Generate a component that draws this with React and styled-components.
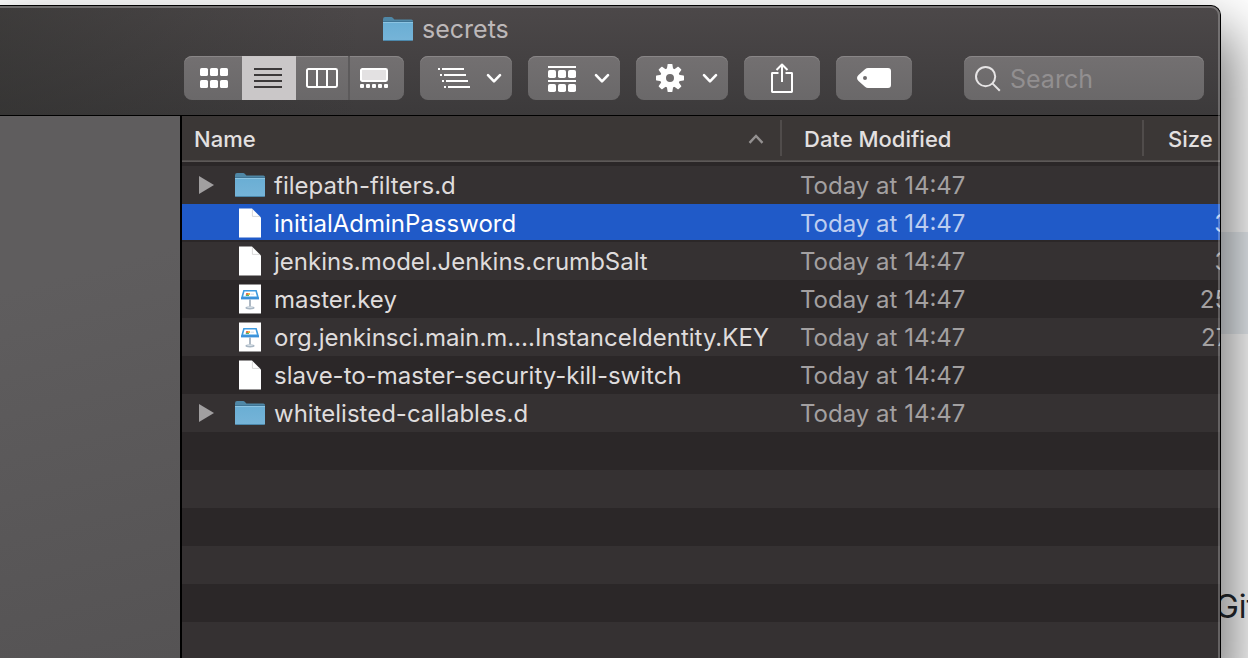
import React from "react";
import styled, { createGlobalStyle, css } from "styled-components";

const GlobalStyle = createGlobalStyle`
  *, *::before, *::after { box-sizing: border-box; }
  html, body { margin: 0; height: 100%; overflow: hidden; }
  body { font-family: Inter, "Liberation Sans", sans-serif; background: #fff; }
  #root { height: 100%; }
  button, input { font: inherit; color: inherit; }
`;

const Desktop = styled.div`
  position: relative;
  display: flex;
  height: 100%;
  padding: 5px 27px 0 0;
  overflow: hidden;
  background: linear-gradient(to bottom, transparent 232px, #eaeff3 232px, #eaeff3 334px, transparent 334px) #fff;
`;

const BehindText = styled.p`
  position: absolute;
  right: -9px;
  bottom: 31px;
  margin: 0;
  font-size: 32px;
  line-height: 40px;
  color: #24292e;
`;

const Window = styled.main`
  position: relative;
  flex: 1;
  min-width: 0;
  display: flex;
  flex-direction: column;
  border: solid #000;
  border-width: 1px 1px 0 0;
  border-radius: 0 10px 0 0;
  background: #2b2728;
  box-shadow: 0 36px 56px 12px rgba(0, 0, 0, 0.54);

  &::after {
    content: "";
    position: absolute;
    inset: 0;
    border: solid rgba(255, 255, 255, 0.24);
    border-width: 2px 2px 0 0;
    border-radius: 0 9px 0 0;
    pointer-events: none;
  }
`;

const Titlebar = styled.header`
  border-bottom: 1px solid #000;
  border-radius: 0 9px 0 0;
  background: linear-gradient(to right, rgba(48, 48, 46, 0.5), transparent 360px),
    linear-gradient(#4c4849, #3c3a3b);
`;

const Title = styled.h1`
  display: flex;
  align-items: center;
  gap: 9px;
  margin: 0;
  padding: 7px 0 11px 383px;
  font-size: 25px;
  font-weight: 400;
  line-height: 32px;
  color: #bdb8b9;
`;

const Toolbar = styled.div`
  display: flex;
  gap: 16px;
  padding: 0 16px 15px 184px;
`;

const controlSurface = css`
  height: 44px;
  border: 0;
  border-radius: 8px;
  background: linear-gradient(#737071, #6a6869);
  box-shadow: inset 0 1px #898687;
  color: #fff;
`;

const ViewSwitch = styled.div`
  ${controlSurface}
  display: flex;
  overflow: hidden;
`;

const ViewButton = styled.button`
  display: flex;
  align-items: center;
  justify-content: center;
  width: ${(p) => (p.$edge === "start" ? 58 : 54)}px;
  padding: ${(p) => (p.$edge === "start" ? "0 0 0 2px" : p.$edge === "end" ? "0 6px 0 0" : "0")};
  border: 0;
  border-right: ${(p) => (p.$divided ? "2px solid #5c5a5b" : "0")};
  background: ${(p) => (p.$active ? "#cac7c8" : "transparent")};
  color: ${(p) => (p.$active ? "#3c393a" : "#fff")};
  ${(p) => p.$active && "padding-right: 2px;"}
`;

const MenuButton = styled.button`
  ${controlSurface}
  display: flex;
  align-items: center;
  justify-content: space-between;
  width: 92px;
  padding: 0 10px 0 17px;
`;

const ActionButton = styled.button`
  ${controlSurface}
  display: flex;
  align-items: center;
  justify-content: center;
  width: 76px;
  padding: 0;
`;

const SearchField = styled.label`
  ${controlSurface}
  display: flex;
  align-items: center;
  gap: 8px;
  width: 240px;
  margin-left: auto;
  padding: 2px 11px 0;
`;

const SearchInput = styled.input`
  flex: 1;
  min-width: 0;
  padding: 0;
  border: 0;
  outline: 0;
  background: none;
  font-size: 25px;
  line-height: 32px;
  &::placeholder { color: #928f90; opacity: 1; }
`;

const Body = styled.div`
  flex: 1;
  min-height: 0;
  display: flex;
`;

const Sidebar = styled.nav`
  flex: none;
  width: 182px;
  border-right: 2px solid #000;
  background: linear-gradient(165deg, #5f5d5e 30%, #555354);
`;

const FilePane = styled.section`
  flex: 1;
  min-width: 0;
  display: flex;
  flex-direction: column;
  overflow: hidden;
`;

const FileTable = styled.table`
  width: calc(100% + 93px);
  table-layout: fixed;
  border-collapse: separate;
  border-spacing: 0;
  font-size: 24px;
  line-height: 30px;
`;

const Column = styled.col`
  width: ${(p) => p.$width};
`;

const HeadCell = styled.th`
  height: 50px;
  padding: 0;
  text-align: left;
  font-weight: 500;
  font-size: 22px;
  color: #e3e0e0;
  background: linear-gradient(#3b3736 44px, #4c4847 44px, #625e5d 46px, #2b2728 46px);
`;

const HeadLabel = styled.div`
  display: flex;
  align-items: center;
  justify-content: space-between;
  height: 36px;
  margin: 4px 0 10px;
  padding: 2px ${(p) => (p.$sorted ? 16 : 0)}px 0 ${(p) => p.$pad}px;
  border-right: ${(p) => (p.$last ? "0" : "2px solid #504c4b")};
`;

const Row = styled.tr`
  background: ${(p) => (p.$selected ? "linear-gradient(#205ac8 36px, #2b2728 36px)" : p.$light ? "#353132" : "#2b2728")};
  color: ${(p) => (p.$selected ? "#fff" : "#dfdcdc")};
`;

const Cell = styled.td`
  height: 38px;
  padding: 0 0 0 ${(p) => p.$pad || 0}px;
  white-space: nowrap;
`;

const MutedCell = styled(Cell)`
  padding-top: 2px;
  color: ${(p) => (p.$selected ? "#bccdf0" : "#a3a0a1")};
  text-align: ${(p) => p.$align || "left"};
`;

const NameLayout = styled.div`
  display: grid;
  grid-template-columns: 36px 30px 1fr;
  align-items: center;
`;

const Disclosure = styled.button`
  display: flex;
  padding: 0;
  border: 0;
  background: none;
  color: #a19fa0;
`;

const IconSlot = styled.span`
  grid-column: 2;
  display: flex;
  justify-content: center;
`;

const FileName = styled.span`
  padding: 2px 0 0 9px;
`;

const EmptyRows = styled.div`
  flex: 1;
  background: repeating-linear-gradient(#2b2728 0 38px, #353132 38px 76px);
`;

function Folder() {
  return (
    <svg width="30" height="26" viewBox="0 0 30 26" aria-hidden="true">
      <defs>
        <linearGradient id="folderFront" x1="0" y1="0" x2="0" y2="1">
          <stop offset="0" stopColor="#6aaed4" />
          <stop offset="1" stopColor="#76b4d8" />
        </linearGradient>
      </defs>
      <path d="M0 3.2Q0 1 2 1H8.2Q9.2 1 10 2L11.4 3.4H28.4Q30 3.4 30 5V9H0Z" fill="#4f87a6" />
      <path d="M0 6H30V23.4Q30 25 28.4 25H1.6Q0 25 0 23.4Z" fill="url(#folderFront)" />
      <path d="M0 5.5H30" stroke="#3f7494" />
      <path d="M0 6.5H30" stroke="#8cc4e2" />
      <path d="M1 24.5H29" stroke="#4c88ab" />
    </svg>
  );
}

function Document() {
  return (
    <svg width="22" height="30" viewBox="0 0 22 30" aria-hidden="true">
      <path d="M0 .5H13L22 9.5V29.5H0Z" fill="#fff" />
      <path d="M13.4 1V8.4H21" fill="none" stroke="#cfcfcf" strokeWidth=".8" />
    </svg>
  );
}

function Keynote() {
  return (
    <svg width="22" height="30" viewBox="0 0 22 30" aria-hidden="true">
      <path d="M0 .5H22V29.5H0Z" fill="#fff" />
      <path d="M4.3 6H17.7L20 14V15H2V14Z" fill="#3f9be0" />
      <path d="M5.5 7.5H16.5L17.8 12.5H4.2Z" fill="#fff" />
      <path d="M2 13.4H20V15.4H2Z" fill="#3b90d8" />
      <path d="M7.2 9H9V11H6.8Z" fill="#ef6a4e" />
      <path d="M9 9H11V11H9Z" fill="#f4b840" />
      <path d="M6.8 10.8H10V12H6.8Z" fill="#4eb874" />
      <path d="M11.5 9.5H15V11H11.5Z" fill="#dce7f0" />
      <path d="M10.3 15.4H11.7V23.5H10.3Z" fill="#8b9bab" />
      <ellipse cx="11" cy="23.8" rx="4.6" ry="1.6" fill="#a9b7c4" />
      <ellipse cx="11" cy="23.3" rx="3" ry=".7" fill="#d9e1e8" />
    </svg>
  );
}

function Chevron() {
  return (
    <svg width="16" height="12" viewBox="0 0 16 12" fill="none" stroke="#fff" strokeWidth="2.6" strokeLinecap="round" strokeLinejoin="round" aria-hidden="true">
      <path d="M2 3.200L8 9.400L14 3.200" />
    </svg>
  );
}

function GridIcon() {
  return (
    <svg width="28" height="20" viewBox="0 0 28 20" fill="currentColor" aria-hidden="true">
      {[0, 12].map((y) => [0, 10, 20].map((x) => (
        <rect key={`${x}-${y}`} x={x} y={y} width="8" height="8" rx="1.6" />
      )))}
    </svg>
  );
}

function ListIcon() {
  return (
    <svg width="28" height="20" viewBox="0 0 28 20" stroke="currentColor" strokeWidth="2" aria-hidden="true">
      <path d="M0 1H28M0 7H28M0 13H28M0 19H28" />
    </svg>
  );
}

function ColumnsIcon() {
  return (
    <svg width="32" height="20" viewBox="0 0 32 20" fill="none" stroke="currentColor" strokeWidth="2" aria-hidden="true">
      <rect x="1" y="1" width="30" height="18" rx="1.4" />
      <path d="M11 1V19M21 1V19" />
    </svg>
  );
}

function GalleryIcon() {
  return (
    <svg width="28" height="20" viewBox="0 0 28 20" fill="#fff" aria-hidden="true">
      <rect x="1" y="1" width="26" height="12" rx="1.4" fill="#e3e1e2" stroke="#fff" strokeWidth="2" />
      {[0, 6, 12, 18, 24].map((x) => (
        <rect key={x} x={x} y="16" width="4" height="4" rx="1" />
      ))}
    </svg>
  );
}

function OutlineIcon() {
  return (
    <svg width="34" height="20" viewBox="-1 0 34 20" stroke="#fff" strokeWidth="2" aria-hidden="true">
      <path d="M0 1H2M4 1H26M2 7H4M6 7H28M4 13H6M8 13H30M6 19H8M10 19H32" />
    </svg>
  );
}

function ArrangeIcon() {
  return (
    <svg width="34" height="28" viewBox="-1 -2 34 28" fill="#fff" aria-hidden="true">
      <path d="M2 0H30V2H2ZM2 14H30V16H2Z" />
      {[4, 18].map((y) => [2, 12, 22].map((x) => (
        <rect key={`${x}-${y}`} x={x} y={y} width="8" height="8" rx="1.8" />
      )))}
    </svg>
  );
}

function GearIcon() {
  return (
    <svg width="34" height="28" viewBox="-17 -14 34 28" aria-hidden="true">
      <circle r="7" fill="none" stroke="#fff" strokeWidth="6" />
      {[0, 45, 90, 135, 180, 225, 270, 315].map((a) => (
        <path key={a} d="M-3.2 -8.5L-2.4 -13.4Q-2.3 -14 -1.7 -14H1.7Q2.3 -14 2.4 -13.4L3.2 -8.5Z" fill="#fff" transform={`rotate(${a})`} />
      ))}
    </svg>
  );
}

function ShareIcon() {
  return (
    <svg width="22" height="30" viewBox="0 0 22 30" fill="none" stroke="#fff" strokeWidth="2" aria-hidden="true">
      <path d="M7.500 10H1.400Q1 10 1 10.400V28.600Q1 29 1.400 29H20.600Q21 29 21 28.600V10.400Q21 10 20.600 10H14.500" />
      <path d="M11 19V1.500M5.500 7L11 1.500L16.500 7" strokeLinejoin="round" />
    </svg>
  );
}

function TagIcon() {
  return (
    <svg width="34" height="20" viewBox="0 0 34 20" aria-hidden="true">
      <path fillRule="evenodd" fill="#fff" d="M11 0H31Q34 0 34 3V17Q34 20 31 20H11Q9.500 20 8 18.800L1.500 13Q0 11.500 0 10Q0 8.500 1.500 7L8 1.200Q9.500 0 11 0ZM8 8A2 2 0 1 0 8 12A2 2 0 1 0 8 8Z" />
    </svg>
  );
}

function SearchIcon() {
  return (
    <svg width="27" height="26" viewBox="0 0 27 26" fill="none" stroke="#e6e4e5" strokeWidth="2" aria-hidden="true">
      <circle cx="10.600" cy="10.600" r="9.600" />
      <path d="M17.400 17.400L24.800 24.800" />
    </svg>
  );
}

const files = [
  { name: "filepath-filters.d", kind: "folder", size: "--" },
  { name: "initialAdminPassword", kind: "document", size: "33 bytes", selected: true },
  { name: "jenkins.model.Jenkins.crumbSalt", kind: "document", size: "32 bytes" },
  { name: "master.key", kind: "keynote", size: "256 bytes" },
  { name: "org.jenkinsci.main.m….InstanceIdentity.KEY", kind: "keynote", size: "272 bytes" },
  { name: "slave-to-master-security-kill-switch", kind: "document", size: "--" },
  { name: "whitelisted-callables.d", kind: "folder", size: "--" },
];

const icons = { folder: Folder, document: Document, keynote: Keynote };

function FileRow({ file, index }) {
  const Icon = icons[file.kind];
  return (
    <Row $selected={file.selected} $light={index % 2 === 0} aria-selected={!!file.selected}>
      <Cell $pad={17}>
        <NameLayout>
          {file.kind === "folder" && (
            <Disclosure aria-label={`Expand ${file.name}`}>
              <svg width="16" height="18" viewBox="0 0 16 18" fill="currentColor" aria-hidden="true">
                <path d="M0 0L15 9L0 18Z" />
              </svg>
            </Disclosure>
          )}
          <IconSlot><Icon /></IconSlot>
          <FileName>{file.name}</FileName>
        </NameLayout>
      </Cell>
      <MutedCell $pad={18} $selected={file.selected}>Today at 14:47</MutedCell>
      <MutedCell $align="right" $selected={file.selected}>{file.size}</MutedCell>
    </Row>
  );
}

export default function App() {
  return (
    <>
      <GlobalStyle />
      <Desktop>
        <BehindText>Git</BehindText>
        <Window>
          <Titlebar>
            <Title><Folder />secrets</Title>
            <Toolbar>
              <ViewSwitch role="group" aria-label="View">
                <ViewButton $edge="start" aria-label="Icons"><GridIcon /></ViewButton>
                <ViewButton $active aria-pressed="true" aria-label="List"><ListIcon /></ViewButton>
                <ViewButton $divided aria-label="Columns"><ColumnsIcon /></ViewButton>
                <ViewButton $edge="end" aria-label="Gallery"><GalleryIcon /></ViewButton>
              </ViewSwitch>
              <MenuButton aria-haspopup="menu" aria-label="Outline"><OutlineIcon /><Chevron /></MenuButton>
              <MenuButton aria-haspopup="menu" aria-label="Group by"><ArrangeIcon /><Chevron /></MenuButton>
              <MenuButton aria-haspopup="menu" aria-label="Actions"><GearIcon /><Chevron /></MenuButton>
              <ActionButton aria-label="Share"><ShareIcon /></ActionButton>
              <ActionButton aria-label="Tags"><TagIcon /></ActionButton>
              <SearchField>
                <SearchIcon />
                <SearchInput type="search" placeholder="Search" aria-label="Search" />
              </SearchField>
            </Toolbar>
          </Titlebar>
          <Body>
            <Sidebar aria-label="Favourites" />
            <FilePane>
              <FileTable>
                <colgroup>
                  <Column $width="auto" />
                  <Column $width="362px" />
                  <Column $width="169px" />
                </colgroup>
                <thead>
                  <tr>
                    <HeadCell scope="col" aria-sort="ascending">
                      <HeadLabel $pad={12} $sorted>
                        Name
                        <svg width="16" height="10" viewBox="0 0 16 10" fill="none" stroke="#949191" strokeWidth="2.4" aria-hidden="true">
                          <path d="M1.500 8.800L8 2L14.500 8.800" />
                        </svg>
                      </HeadLabel>
                    </HeadCell>
                    <HeadCell scope="col"><HeadLabel $pad={22}>Date Modified</HeadLabel></HeadCell>
                    <HeadCell scope="col"><HeadLabel $pad={24} $last>Size</HeadLabel></HeadCell>
                  </tr>
                </thead>
                <tbody>
                  {files.map((file, i) => <FileRow key={file.name} file={file} index={i} />)}
                </tbody>
              </FileTable>
              <EmptyRows />
            </FilePane>
          </Body>
        </Window>
      </Desktop>
    </>
  );
}
